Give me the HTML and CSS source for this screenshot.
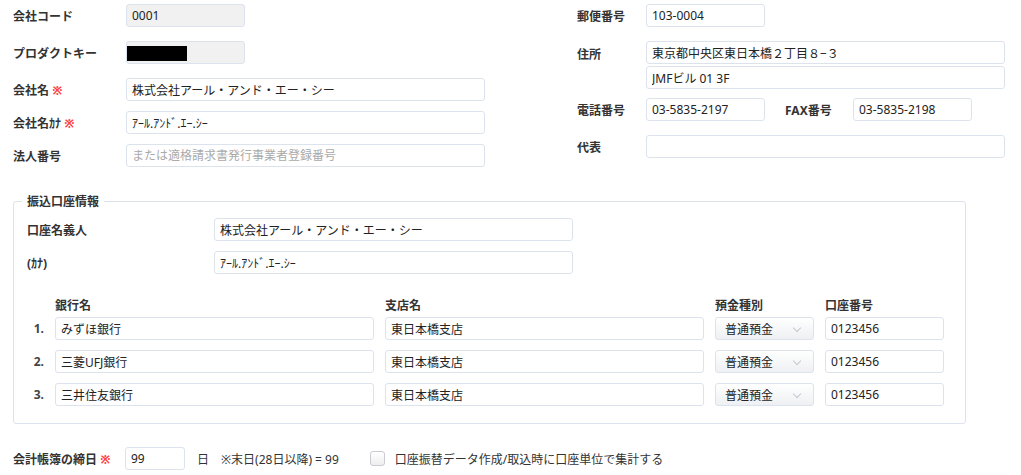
FILE: index.html
```html
<!DOCTYPE html>
<html lang="ja">
<head>
  <meta charset="UTF-8" />
  <title>会社情報</title>
  <link rel="stylesheet" href="styles.css">
</head>
<body>
  <div class="top">
    <div class="col-left">
      <div class="row gap-l">
        <label class="lbl">会社コード</label>
        <input class="inp small locked" type="text" value="0001" readonly>
      </div>
      <div class="row gap-l">
        <label class="lbl">プロダクトキー</label>
        <div class="inp small locked masked"><span class="mask"></span></div>
      </div>
      <div class="row gap-s">
        <label class="lbl">会社名 <span class="req">※</span></label>
        <input class="inp wide" type="text" value="株式会社アール・アンド・エー・シー">
      </div>
      <div class="row gap-s">
        <label class="lbl">会社名ｶﾅ <span class="req">※</span></label>
        <input class="inp wide" type="text" value="ｱｰﾙ.ｱﾝﾄﾞ.ｴｰ.ｼｰ">
      </div>
      <div class="row">
        <label class="lbl">法人番号</label>
        <input class="inp wide" type="text" placeholder="または適格請求書発行事業者登録番号">
      </div>
    </div>

    <div class="col-right">
      <div class="row gap-l">
        <label class="lbl">郵便番号</label>
        <input class="inp small" type="text" value="103-0004">
      </div>
      <div class="row top-align gap-m">
        <label class="lbl">住所</label>
        <div class="stack">
          <input class="inp wide" type="text" value="東京都中央区東日本橋２丁目８−３">
          <input class="inp wide" type="text" value="JMFビル 01 3F">
        </div>
      </div>
      <div class="row gap-l">
        <label class="lbl">電話番号</label>
        <input class="inp small" type="text" value="03-5835-2197">
        <label class="lbl fax">FAX番号</label>
        <input class="inp small" type="text" value="03-5835-2198">
      </div>
      <div class="row">
        <label class="lbl">代表</label>
        <input class="inp wide" type="text" value="">
      </div>
    </div>
  </div>

  <fieldset class="bank">
    <legend>振込口座情報</legend>
    <div class="row gap-s">
      <label class="lbl bank-lbl">口座名義人</label>
      <input class="inp wide" type="text" value="株式会社アール・アンド・エー・シー">
    </div>
    <div class="row">
      <label class="lbl bank-lbl">(ｶﾅ)</label>
      <input class="inp wide" type="text" value="ｱｰﾙ.ｱﾝﾄﾞ.ｴｰ.ｼｰ">
    </div>

    <div class="accounts">
      <span></span>
      <span class="th">銀行名</span>
      <span class="th">支店名</span>
      <span class="th">預金種別</span>
      <span class="th">口座番号</span>

      <span class="num">1.</span>
      <input class="inp" type="text" value="みずほ銀行">
      <input class="inp" type="text" value="東日本橋支店">
      <div class="sel">普通預金</div>
      <input class="inp" type="text" value="0123456">

      <span class="num">2.</span>
      <input class="inp" type="text" value="三菱UFJ銀行">
      <input class="inp" type="text" value="東日本橋支店">
      <div class="sel">普通預金</div>
      <input class="inp" type="text" value="0123456">

      <span class="num">3.</span>
      <input class="inp" type="text" value="三井住友銀行">
      <input class="inp" type="text" value="東日本橋支店">
      <div class="sel">普通預金</div>
      <input class="inp" type="text" value="0123456">
    </div>
  </fieldset>

  <div class="row closing">
    <label class="lbl">会計帳簿の締日 <span class="req">※</span></label>
    <input class="inp day" type="text" value="99">
    <span class="unit">日</span>
    <span class="note">※末日(28日以降) = 99</span>
    <span class="check"></span>
    <span class="check-text">口座振替データ作成/取込時に口座単位で集計する</span>
  </div>
</body>
</html>
```

FILE: styles.css
```css
body {
  margin: 0;
  padding: 4px 13px;
  font-family: "Noto Sans", "Noto Sans CJK JP", sans-serif;
  font-size: 12px;
  color: #333;
  background: #fff;
}
.top {
  display: flex;
}
.col-left {
  width: 564px;
}
.row {
  display: flex;
  align-items: center;
}
.row.top-align {
  align-items: flex-start;
}
.row.top-align .lbl {
  padding-top: 4px;
}
.gap-l { margin-bottom: 14px; }
.gap-m { margin-bottom: 9px; }
.gap-s { margin-bottom: 10px; }
.lbl {
  width: 113px;
  font-weight: bold;
  color: #333;
  flex-shrink: 0;
}
.col-right .lbl {
  width: 69px;
}
.col-right .lbl.fax {
  width: 68px;
  margin-left: 20px;
}
.req {
  color: #ff4040;
}
.inp {
  box-sizing: border-box;
  height: 23px;
  border: 1px solid #dde3ec;
  border-radius: 3px;
  padding: 0 5px;
  font-family: "Noto Sans", "Noto Sans CJK JP", sans-serif;
  font-size: 12px;
  color: #222;
  background: #fff;
  margin: 0;
  outline: none;
}
.inp::placeholder {
  color: #aaa;
}
.small { width: 119px; }
.wide { width: 359px; }
.locked {
  background: #f1f1f1;
}
.masked {
  padding: 0;
  display: flex;
  align-items: center;
}
.mask {
  display: block;
  width: 60px;
  height: 15px;
  margin-top: 2px;
  background: #000;
}
.stack {
  display: flex;
  flex-direction: column;
  gap: 2px;
}

.bank {
  width: 953px;
  box-sizing: border-box;
  margin: 25px 0 0;
  padding: 8px 13px 17px;
  border: 1px solid #dde3ec;
  border-radius: 3px;
  min-width: 0;
}
.bank legend {
  font-weight: bold;
  color: #333;
  padding: 0 5px;
  margin-left: -5px;
}
.bank-lbl {
  width: 187px;
}
.accounts {
  display: grid;
  grid-template-columns: 17px 319px 319px 99px 119px;
  column-gap: 11px;
  row-gap: 10px;
  margin-top: 25px;
  align-items: center;
}
.accounts .th {
  font-weight: bold;
  color: #333;
  margin-bottom: -6px;
  line-height: 14px;
}
.accounts .inp {
  width: 100%;
}
.num {
  text-align: right;
  font-weight: bold;
  color: #444;
  line-height: 14px;
}
.sel {
  box-sizing: border-box;
  height: 23px;
  border: 1px solid #dde3ec;
  border-radius: 3px;
  padding: 0 9px;
  display: flex;
  align-items: center;
  color: #222;
  background: linear-gradient(#ffffff, #eef0f3);
  position: relative;
}
.sel::after {
  content: "";
  position: absolute;
  right: 13px;
  top: 7px;
  width: 5px;
  height: 5px;
  border-right: 1px solid #c4c8cf;
  border-bottom: 1px solid #c4c8cf;
  transform: rotate(45deg);
}

.closing {
  margin-top: 23px;
}
.day {
  width: 60px;
  margin-left: -1px;
}
.unit {
  margin-left: 12px;
}
.note {
  margin-left: 12px;
}
.check {
  box-sizing: border-box;
  width: 15px;
  height: 15px;
  margin-left: 31px;
  border: 1px solid #c8ccd2;
  border-radius: 3px;
  background: linear-gradient(#ffffff, #eeeeee);
}
.check-text {
  margin-left: 10px;
}
```
